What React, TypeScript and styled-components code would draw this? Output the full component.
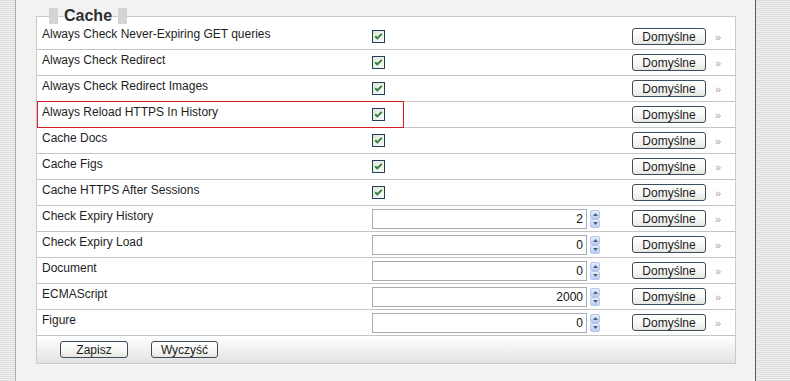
import React from 'react'
import styled, { createGlobalStyle } from 'styled-components'

const GlobalStyle = createGlobalStyle`
  html, body {
    margin: 0;
    height: 381px;
    overflow: hidden;
    background: #f2f2f2;
    font-family: "Liberation Sans", Arial, sans-serif;
  }
`

const Page = styled.div`
  display: grid;
  grid-template-columns: 15px 1px 739px 1px 1fr;
  height: 381px;
`
const Stripes = styled.div`
  background: repeating-linear-gradient(to bottom, #dcdcdc 0 1px, #f0f0f0 1px 2px);
`
const Rule = styled.div<{ $tone: string }>`
  background: ${(p) => p.$tone};
`
const Main = styled.main`
  background: #f2f2f2;
  padding: 16px 19px 0 20px;
`
const Panel = styled.section`
  width: 700px;
  box-sizing: border-box;
  background: #fff;
  border: 1px solid #cacaca;
`
const Legend = styled.div`
  display: flex;
  align-items: center;
  gap: 6px;
  width: fit-content;
  height: 16px;
  margin: -9px 0 0 12px;
`
const LegendBlock = styled.span`
  width: 9px;
  height: 16px;
  background: #d4d4d4;
`
const LegendText = styled.span`
  font-size: 16px;
  font-weight: bold;
  line-height: 16px;
  color: #2e2e2e;
  background: linear-gradient(to bottom, #f2f2f2 50%, #fff 50%);
`
const Row = styled.div`
  position: relative;
  display: grid;
  grid-template-columns: 335px 260px 74px 1fr;
  align-items: center;
  height: 26px;
  box-sizing: border-box;
  border-bottom: 1px solid #c4c4c4;
`
const Label = styled.div`
  align-self: start;
  padding: 3px 0 0 5px;
  font-size: 12px;
  line-height: 14px;
  color: #1e1e1e;
  white-space: nowrap;
`
const Highlight = styled.div`
  position: absolute;
  z-index: 2;
  left: 0;
  top: -1px;
  width: 367px;
  height: 27px;
  box-sizing: border-box;
  border: 1px solid rgb(214, 30, 36);
  pointer-events: none;
`
const Control = styled.div`
  display: flex;
  align-items: center;
  gap: 3px;
`
const NumberField = styled.input`
  width: 215px;
  height: 20px;
  box-sizing: border-box;
  border: 1px solid #a5acb2;
  padding: 0 3px;
  text-align: right;
  font: 12px "Liberation Sans", Arial, sans-serif;
  color: #111;
  background: #fff;
`
const Spinner = styled.div`
  display: flex;
  flex-direction: column;
`
const SpinButton = styled.span`
  display: flex;
  align-items: center;
  justify-content: center;
  width: 10px;
  height: 9px;
  box-sizing: border-box;
  border: 1px solid #b4c6ee;
  border-radius: 2px;
  background: linear-gradient(#e6eefd, #bccdf4);
`
const Button = styled.button<{ $w: number }>`
  width: ${(p) => p.$w}px;
  height: 17px;
  padding: 0;
  box-sizing: border-box;
  border: 1px solid #3a4c5e;
  border-radius: 3px;
  background: linear-gradient(#ffffff, #f7f7f4 55%, #e6e6e1);
  font: 400 12px "Liberation Sans", Arial, sans-serif;
  line-height: 14px;
  color: #1a1a1a;
`
const More = styled.span`
  margin-left: 9px;
  font-size: 11px;
  color: #a4a4a4;
`
const Footer = styled.div`
  display: flex;
  align-items: center;
  gap: 23px;
  height: 27px;
  padding-left: 23px;
  background: linear-gradient(#ffffff, #e2e2e2);
`

type Setting =
  | { label: string; kind: 'check' }
  | { label: string; kind: 'number'; value: string }

const settings: Setting[] = [
  { label: 'Always Check Never-Expiring GET queries', kind: 'check' },
  { label: 'Always Check Redirect', kind: 'check' },
  { label: 'Always Check Redirect Images', kind: 'check' },
  { label: 'Always Reload HTTPS In History', kind: 'check' },
  { label: 'Cache Docs', kind: 'check' },
  { label: 'Cache Figs', kind: 'check' },
  { label: 'Cache HTTPS After Sessions', kind: 'check' },
  { label: 'Check Expiry History', kind: 'number', value: '2' },
  { label: 'Check Expiry Load', kind: 'number', value: '0' },
  { label: 'Document', kind: 'number', value: '0' },
  { label: 'ECMAScript', kind: 'number', value: '2000' },
  { label: 'Figure', kind: 'number', value: '0' },
]

function CheckBox() {
  return (
    <svg width="13" height="13" viewBox="0 0 13 13">
      <defs>
        <linearGradient id="cb" x1="0" y1="0" x2="1" y2="1">
          <stop offset="0" stopColor="#dbe5d8" />
          <stop offset="1" stopColor="#fbfcfa" />
        </linearGradient>
      </defs>
      <rect x="0.5" y="0.5" width="12" height="12" fill="url(#cb)" stroke="#23405a" />
      <path d="M3.2 6.2 L5.3 8.4 L9.8 3.9" fill="none" stroke="#35803a" strokeWidth="2" />
    </svg>
  )
}

function Arrow({ up }: { up?: boolean }) {
  return (
    <svg width="5" height="3" viewBox="0 0 5 3">
      <path d={up ? 'M0 3 L2.5 0 L5 3 Z' : 'M0 0 L2.5 3 L5 0 Z'} fill="#4b5f86" />
    </svg>
  )
}

function SettingRow({ setting, marked }: { setting: Setting; marked: boolean }) {
  return (
    <Row>
      <Label>{setting.label}</Label>
      <Control>
        {setting.kind === 'check' ? (
          <CheckBox />
        ) : (
          <>
            <NumberField readOnly value={setting.value} />
            <Spinner>
              <SpinButton>
                <Arrow up />
              </SpinButton>
              <SpinButton>
                <Arrow />
              </SpinButton>
            </Spinner>
          </>
        )}
      </Control>
      <Button $w={74}>Domyślne</Button>
      <More>»</More>
      {marked && <Highlight />}
    </Row>
  )
}

export default function App() {
  return (
    <>
      <GlobalStyle />
      <Page>
        <Stripes />
        <Rule $tone="#acacac" />
        <Main>
          <Panel>
            <Legend>
              <LegendBlock />
              <LegendText>Cache</LegendText>
              <LegendBlock />
            </Legend>
            {settings.map((s, i) => (
              <SettingRow key={s.label} setting={s} marked={i === 3} />
            ))}
            <Footer>
              <Button $w={68}>Zapisz</Button>
              <Button $w={67}>Wyczyść</Button>
            </Footer>
          </Panel>
        </Main>
        <Rule $tone="#5e5e5e" />
        <Stripes />
      </Page>
    </>
  )
}
